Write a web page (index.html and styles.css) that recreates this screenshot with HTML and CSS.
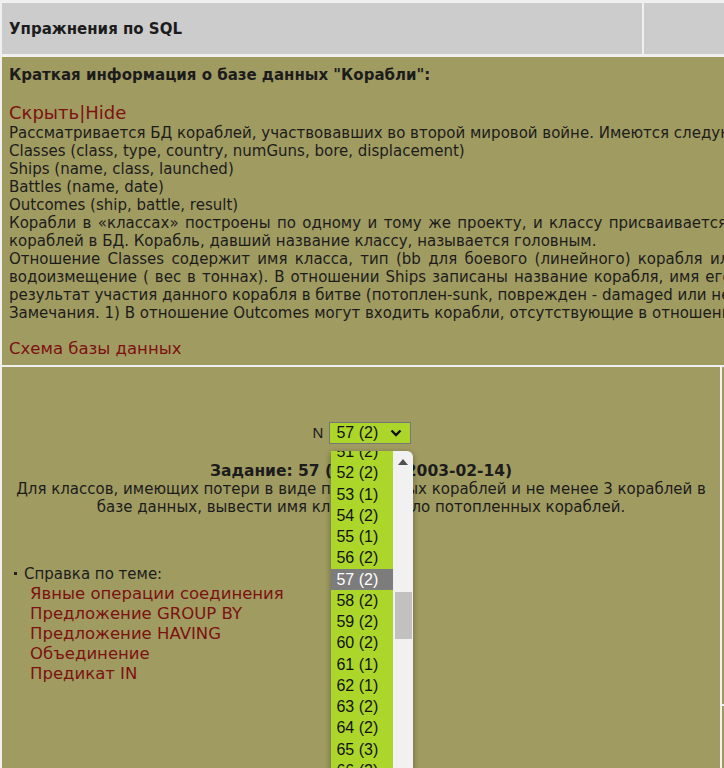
FILE: index.html
```html
<!DOCTYPE html>
<html lang="ru">
<head>
<meta charset="utf-8">
<title>Упражнения по SQL</title>
<link rel="stylesheet" href="styles.css">
</head>
<body>
<div class="page">
  <div class="top-row">
    <div class="hdr-main">Упражнения по SQL</div>
    <div class="hdr-side"></div>
  </div>

  <div class="info">
    <div class="info-title">Краткая информация о базе данных "Корабли":</div>
    <div class="blank"></div>
    <a class="toggle" href="#">Скрыть|Hide</a>
    <div class="info-text">
      <div>Рассматривается БД кораблей, участвовавших во второй мировой войне. Имеются следующие отношения:</div>
      <div>Classes (class, type, country, numGuns, bore, displacement)</div>
      <div>Ships (name, class, launched)</div>
      <div>Battles (name, date)</div>
      <div>Outcomes (ship, battle, result)</div>
      <p><span class="jl">Корабли в «классах» построены по одному и тому же проекту, и классу присваивается либо имя первого корабля, построенного по данному проекту, либо названию класса дается имя проекта, которое не совпадает ни с одним из</span>кораблей в БД. Корабль, давший название классу, называется головным.</p>
      <p><span class="jl">Отношение Classes содержит имя класса, тип (bb для боевого (линейного) корабля или bc для боевого крейсера), страну, в которой построен корабль, число главных орудий, калибр орудий (диаметр ствола орудия в дюймах) и</span><span class="jl">водоизмещение ( вес в тоннах). В отношении Ships записаны название корабля, имя его класса и год спуска на воду. В отношение Battles включены название и дата битвы, в которой участвовали корабли, а в отношении Outcomes –</span>результат участия данного корабля в битве (потоплен-sunk, поврежден - damaged или невредим - OK).</p>
      <div>Замечания. 1) В отношение Outcomes могут входить корабли, отсутствующие в отношении Ships. 2) Потопленный корабль в последующих битвах участия не принимает.</div>
    </div>
    <div class="blank"></div>
    <a class="schema" href="#">Схема базы данных</a>
  </div>

  <div class="main-row">
    <div class="task">
      <div class="selector">
        <span class="n-label">N</span>
        <div class="select-wrap">
          <div class="select">
            <span>57 (2)</span>
            <svg class="chev" width="12" height="8" viewBox="0 0 12 8"><path d="M1.5 1.5 L6 6 L10.5 1.5" fill="none" stroke="#111" stroke-width="2.4"/></svg>
          </div>
          <div class="listbox">
            <div class="items">
              <div class="item">51 (2)</div>
              <div class="item">52 (2)</div>
              <div class="item">53 (1)</div>
              <div class="item">54 (2)</div>
              <div class="item">55 (1)</div>
              <div class="item">56 (2)</div>
              <div class="item selected">57 (2)</div>
              <div class="item">58 (2)</div>
              <div class="item">59 (2)</div>
              <div class="item">60 (2)</div>
              <div class="item">61 (1)</div>
              <div class="item">62 (1)</div>
              <div class="item">63 (2)</div>
              <div class="item">64 (2)</div>
              <div class="item">65 (3)</div>
              <div class="item">66 (2)</div>
            </div>
            <div class="scrollbar">
              <svg class="arrow" width="10" height="6" viewBox="0 0 10 6"><path d="M0 6 L5 0 L10 6 Z" fill="#505050"/></svg>
              <div class="thumb"></div>
            </div>
          </div>
        </div>
      </div>
      <div class="task-title">Задание: 57 (<a href="#">Serge I</a>: 2003-02-14)</div>
      <div class="task-desc">Для классов, имеющих потери в виде потопленных кораблей и не менее 3 кораблей в<br>базе данных, вывести имя класса и число потопленных кораблей.</div>
      <ul class="help">
        <li>Справка по теме:
          <div class="help-links">
            <a href="#">Явные операции соединения</a>
            <a href="#">Предложение GROUP BY</a>
            <a href="#">Предложение HAVING</a>
            <a href="#">Объединение</a>
            <a href="#">Предикат IN</a>
          </div>
        </li>
      </ul>
    </div>
    <div class="side">
      <div class="side-top"></div>
      <div class="side-bottom"></div>
    </div>
  </div>
</div>
</body>
</html>
```

FILE: styles.css
```css
html, body {
  margin: 0;
  padding: 0;
  overflow: hidden;
  background: #f0f0f0;
}

body {
  font-family: "DejaVu Sans", Verdana, sans-serif;
  font-size: 15px;
  color: #1c1c1c;
}

a {
  color: #7d1111;
  text-decoration: none;
}

.page {
  display: flex;
  flex-direction: column;
  padding: 3px 0 0 2px;
  gap: 3px;
  width: 2100px;
}

.top-row {
  display: grid;
  grid-template-columns: 640px 80px;
  gap: 2px;
  height: 51px;
}

.hdr-main {
  background: #cccccc;
  display: flex;
  align-items: center;
  padding-left: 7px;
  font-weight: bold;
  font-size: 15px;
}

.hdr-side {
  background: #cccccc;
}

.info {
  background: #a09b61;
  padding: 9px 7px 7px;
  width: 2000px;
  line-height: 18px;
}

.info-title {
  font-weight: bold;
  font-size: 15px;
}

.blank {
  height: 18px;
}

.toggle {
  display: block;
  font-size: 18px;
  line-height: 22px;
}

.info-text {
  width: 1905px;
}

.info-text p {
  margin: 0;
}

.jl {
  display: block;
  text-align: justify;
  text-align-last: justify;
}

.schema {
  display: block;
  font-size: 16.5px;
}

.main-row {
  display: grid;
  grid-template-columns: 718px 10px;
  gap: 2px;
  margin-top: -1px;
  height: 420px;
}

.task {
  background: #a09b61;
  padding-top: 55px;
  line-height: 18px;
}

.selector {
  display: flex;
  justify-content: center;
  align-items: center;
  gap: 6px;
  padding-left: 2px;
}

.n-label {
  font-family: "Liberation Sans", Arial, sans-serif;
  font-size: 15px;
}

.select-wrap {
  position: relative;
}

.select {
  box-sizing: border-box;
  width: 82px;
  height: 22px;
  background: #acd72a;
  border: 1px solid #767676;
  display: flex;
  align-items: center;
  justify-content: space-between;
  padding: 0 8px 0 6px;
  font-family: "Liberation Sans", Arial, sans-serif;
  font-size: 16px;
  color: #111;
}

.listbox {
  position: absolute;
  left: 2px;
  top: 29px;
  width: 82px;
  height: 330px;
  display: flex;
  border-radius: 0 6px 0 0;
  overflow: hidden;
  box-shadow: 0 2px 6px rgba(0, 0, 0, 0.35);
  z-index: 5;
}

.items {
  width: 62px;
  background: #acd72a;
  margin-top: -10px;
}

.item {
  height: 21.25px;
  line-height: 21.25px;
  padding-left: 5px;
  font-family: "Liberation Sans", Arial, sans-serif;
  font-size: 16px;
  color: #111;
}

.item.selected {
  background: #7c7c7c;
  color: #fff;
}

.scrollbar {
  width: 20px;
  background: #f1f1f1;
  position: relative;
}

.arrow {
  position: absolute;
  left: 5px;
  top: 8px;
}

.thumb {
  position: absolute;
  left: 2px;
  right: 1px;
  top: 141px;
  height: 47px;
  background: #c1c1c1;
}

.task-title {
  margin-top: 18px;
  text-align: center;
  font-weight: bold;
  font-size: 15.5px;
}

.task-desc {
  text-align: center;
}

.help {
  margin: 48px 0 0;
  padding: 0 0 0 12px;
  list-style: none;
  line-height: 20px;
}

.help li::before {
  content: "";
  display: inline-block;
  width: 3px;
  height: 3px;
  background: #222;
  margin-right: 7px;
  vertical-align: 4px;
}

.help-links {
  padding-left: 16px;
  font-size: 16.5px;
}

.help-links a {
  display: block;
}

.side {
  display: flex;
  flex-direction: column;
  gap: 2px;
}

.side-top {
  height: 337px;
  background: #a09b61;
}

.side-bottom {
  flex: 1;
  background: #a09b61;
}
```
